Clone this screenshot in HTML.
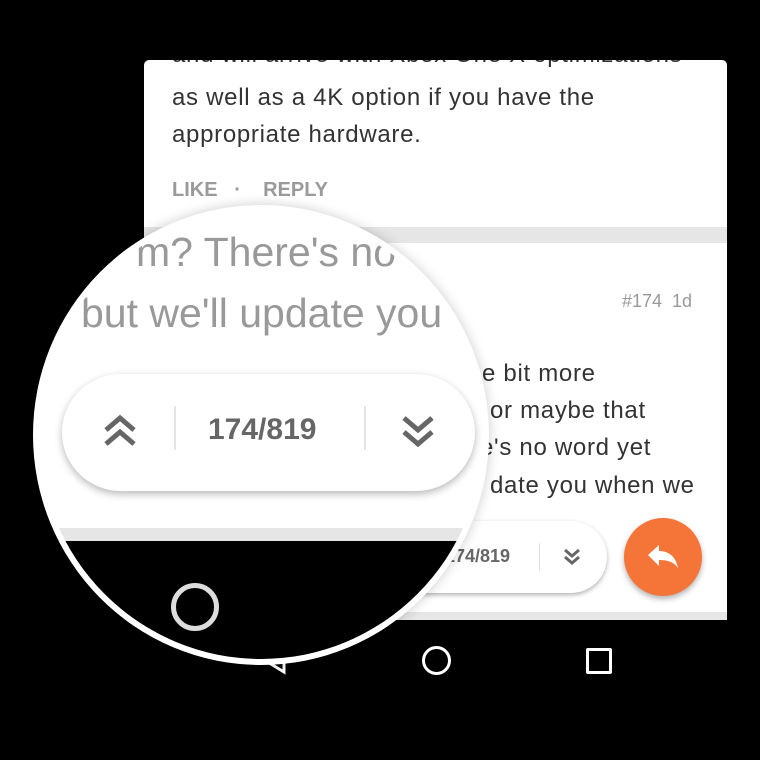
<!DOCTYPE html>
<html><head><style>
*{margin:0;padding:0;box-sizing:border-box}
body{width:760px;height:760px;background:#000;position:relative;overflow:hidden;font-family:"Liberation Sans",sans-serif}
.abs{position:absolute;white-space:nowrap}
.t{font-size:24px;color:#333;letter-spacing:0.7px}
</style></head><body>
<div class="abs" style="left:144px;top:60px;width:583px;height:560px;background:#fff;border-radius:5px 5px 0 0;overflow:hidden">
  <div class="abs t" style="left:28px;top:-19px">and will arrive with Xbox One X optimizations</div>
  <div class="abs t" style="left:28px;top:24px">as well as a 4K option if you have the</div>
  <div class="abs t" style="left:28px;top:61px">appropriate hardware.</div>
  <div class="abs" style="left:28px;top:119px;font-size:20px;font-weight:bold;color:#9a9a9a">LIKE &nbsp;&nbsp;·&nbsp;&nbsp;&nbsp; REPLY</div>
  <div class="abs" style="left:0;top:167px;width:583px;height:16px;background:#e6e6e6"></div>
  <div class="abs" style="left:478px;top:231px;font-size:18px;color:#999">#174&nbsp;&nbsp;1d</div>
  <div class="abs t" style="left:338px;top:300px">e bit more</div>
  <div class="abs t" style="left:346px;top:337px">or maybe that</div>
  <div class="abs t" style="left:336px;top:374px">e's no word yet</div>
  <div class="abs t" style="left:346px;top:412px">date you when we</div>
  <div class="abs" style="left:160px;top:461px;width:303px;height:72px;background:#fff;border-radius:36px;box-shadow:0 2px 5px rgba(0,0,0,.3)">
    <div class="abs" style="left:141px;top:25px;font-size:18px;font-weight:bold;color:#666">174/819</div>
    <div class="abs" style="left:235px;top:22px;width:1px;height:28px;background:#e2e2e2"></div>
    <svg class="abs" style="left:258px;top:26px" width="20" height="20" viewBox="0 0 20 20"><path d="M3 3l7 6 7-6M3 10l7 6 7-6" fill="none" stroke="#666" stroke-width="3"/></svg>
  </div>
  <div class="abs" style="left:480px;top:458px;width:78px;height:78px;border-radius:50%;background:#f57538;box-shadow:0 3px 6px rgba(0,0,0,.3)">
    <svg class="abs" style="left:22px;top:24px" width="34" height="30" viewBox="0 0 34 30"><path d="M2 13L13 3v6c10 0 17 6 19 17-4-6-10-8-19-8v6z" fill="#fff"/></svg>
  </div>
  <div class="abs" style="left:0;top:552px;width:583px;height:8px;background:#e6e6e6"></div>
</div>
<div class="abs" style="left:144px;top:620px;width:583px;height:78px;background:#000">
  <svg class="abs" style="left:116px;top:26px" width="30" height="30" viewBox="0 0 30 30"><path d="M24 4L6 15l18 11z" fill="none" stroke="#fff" stroke-width="3"/></svg>
  <div class="abs" style="left:278px;top:26px;width:29px;height:29px;border:3px solid #fff;border-radius:50%"></div>
  <div class="abs" style="left:442px;top:28px;width:26px;height:26px;border:3px solid #fff;border-radius:2px"></div>
</div>
<div class="abs" style="left:33px;top:205px;width:456px;height:460px;border-radius:50%;background:#fff;border:6px solid #fff;overflow:hidden;box-shadow:0 0 12px rgba(0,0,0,.2)">
  <div class="abs" style="left:0;top:0;width:460px;height:460px;background:#fff">
    <div class="abs" style="left:97px;top:18px;font-size:41px;color:#999">m? There's no</div>
    <div class="abs" style="left:42px;top:79px;font-size:41px;color:#999">but we'll update you</div>
    <div class="abs" style="left:23px;top:163px;width:413px;height:117px;border-radius:59px;background:#fff;box-shadow:0 3px 8px rgba(0,0,0,.28)">
      <svg class="abs" style="left:41px;top:40px" width="34" height="34" viewBox="0 0 34 34"><path d="M3 16L17 4l14 12M3 30l14-12 14 12" fill="none" stroke="#666" stroke-width="5"/></svg>
      <div class="abs" style="left:112px;top:32px;width:2px;height:44px;background:#e4e4e4"></div>
      <div class="abs" style="left:146px;top:39px;font-size:30px;font-weight:bold;color:#666">174/819</div>
      <div class="abs" style="left:302px;top:32px;width:2px;height:44px;background:#e4e4e4"></div>
      <svg class="abs" style="left:339px;top:40px" width="34" height="34" viewBox="0 0 34 34"><path d="M3 4l14 12 14-12M3 18l14 12 14-12" fill="none" stroke="#666" stroke-width="5"/></svg>
    </div>
    <div class="abs" style="left:0;top:317px;width:460px;height:13px;background:#e6e6e6"></div>
    <div class="abs" style="left:0;top:330px;width:460px;height:140px;background:#000"></div>
    <div class="abs" style="left:132px;top:372px;width:48px;height:48px;border:5px solid #ddd;border-radius:50%"></div>
  </div>
</div>
</body></html>
